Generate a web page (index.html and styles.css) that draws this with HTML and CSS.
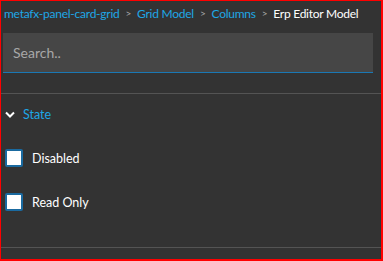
FILE: index.html
```html
<!DOCTYPE html>
<html lang="en">
<head>
    <meta charset="UTF-8">
    <title>Erp Editor Model</title>
    <link rel="stylesheet" href="styles.css">
</head>
<body>
    <div class="panel">
        <div class="crumbs">
            <a href="#">metafx-panel-card-grid</a>
            <span class="sep">&gt;</span>
            <a href="#">Grid Model</a>
            <span class="sep">&gt;</span>
            <a href="#">Columns</a>
            <span class="sep">&gt;</span>
            <span class="current">Erp Editor Model</span>
        </div>
        <div class="search">
            <input type="text" placeholder="Search..">
        </div>
        <div class="group">
            <div class="group-head">
                <svg class="chevron" width="10" height="7" viewBox="0 0 10 7">
                    <path d="M1 1.5 L5 5.5 L9 1.5" fill="none" stroke="#fff" stroke-width="2"/>
                </svg>
                <span>State</span>
            </div>
            <label class="check">
                <span class="box"></span>
                <span>Disabled</span>
            </label>
            <label class="check">
                <span class="box"></span>
                <span>Read Only</span>
            </label>
        </div>
    </div>
</body>
</html>
```

FILE: styles.css
```css
* {
    margin: 0;
    padding: 0;
    box-sizing: border-box;
}

body {
    background: #333;
    font-family: 'Lato', 'Noto Sans', sans-serif;
    font-size: 12.5px;
    width: 383px;
    height: 261px;
    overflow: hidden;
}

.panel {
    height: 261px;
    border: 1px solid #ff0000;
    border-right-width: 2px;
    border-bottom-width: 2px;
    background: #333;
}

/* breadcrumb */
.crumbs {
    display: flex;
    align-items: center;
    gap: 6px;
    padding-left: 3px;
    height: 24px;
    white-space: nowrap;
    font-size: 12px;
    letter-spacing: -0.25px;
}

.crumbs a {
    color: #1ea7e6;
    text-decoration: none;
}

.crumbs .sep {
    color: #aaa;
    font-size: 10px;
}

.crumbs .current {
    color: #fff;
}

/* search */
.search {
    padding: 8px 8px 0 2px;
}

.search input {
    width: 100%;
    height: 40px;
    background: #464646;
    border: none;
    border-bottom: 1px solid #1a78b4;
    color: #ddd;
    font-family: inherit;
    font-size: 14px;
    padding: 0 10px;
    outline: none;
}

.search input::placeholder {
    color: #a8a8a8;
}

/* group */
.group {
    margin-top: 20px;
    border-top: 1px solid #545454;
    border-bottom: 1px solid #545454;
    height: 155px;
}

.group-head {
    display: flex;
    align-items: center;
    gap: 8px;
    padding-left: 4px;
    height: 41px;
    color: #1ea7e6;
}

.check {
    display: flex;
    align-items: center;
    gap: 9px;
    padding-left: 4px;
    height: 22px;
    margin-top: 22px;
    color: #fff;
}

.group-head + .check {
    margin-top: 12px;
}

.box {
    width: 18px;
    height: 18px;
    background: #fff;
    border: 2px solid #1a6aa0;
    border-radius: 2px;
}
```
